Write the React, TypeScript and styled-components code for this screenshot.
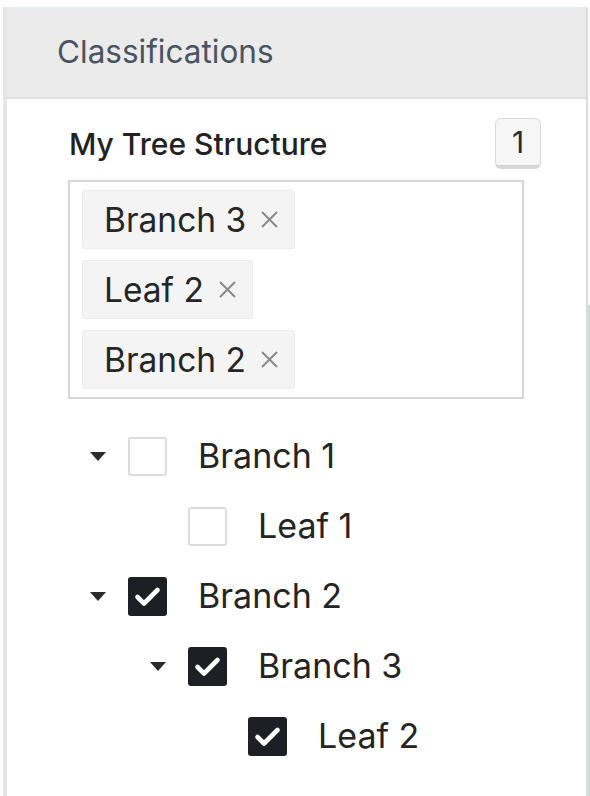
import React from "react";
import styled, { createGlobalStyle } from "styled-components";

const Global = createGlobalStyle`
  html, body { margin: 0; padding: 0; background: #ffffff; }
  body { font-family: Inter, "Noto Sans", "Liberation Sans", sans-serif; }
  * { box-sizing: border-box; }
`;

const Page = styled.div`
  display: flex;
  height: 796px;
  padding-left: 3px;
  padding-top: 7px;
  overflow: hidden;
`;

const Panel = styled.div`
  width: 585px;
  flex: none;
  display: flex;
  flex-direction: column;
  border-left: 4px solid #e6e6e6;
  border-right: 2px solid #dcdcdc;
  border-top: 1px solid #e4eef2;
  background: #ffffff;
`;

const SideStrip = styled.div`
  flex: 1;
  margin-top: 298px;
  background: #cfdcdf;
`;

const Header = styled.div`
  height: 91px;
  background: #ebebeb;
  border-bottom: 2px solid #e1e1e1;
  display: flex;
  align-items: center;
  padding-left: 50px;
  padding-bottom: 2px;
`;

const HeaderTitle = styled.h2`
  margin: 0;
  font-size: 31.5px;
  font-weight: 400;
  color: #4a5461;
`;

const Body = styled.div`
  padding: 19px 62px 0 61px;
  display: flex;
  flex-direction: column;
`;

const LabelRow = styled.div`
  display: flex;
  align-items: center;
  justify-content: space-between;
  margin-right: -17px;
  padding-left: 1px;
  height: 51px;
`;

const Label = styled.span`
  font-size: 30px;
  font-weight: 500;
  color: #222222;
  padding-top: 1px;
`;

const Badge = styled.span`
  width: 46px;
  height: 51px;
  background: #f6f6f6;
  border: 1px solid #dadada;
  border-bottom: 4px solid #d6d6d6;
  border-radius: 6px;
  display: flex;
  align-items: center;
  justify-content: center;
  font-size: 30px;
  color: #2a2a2a;
`;

const TagBox = styled.div`
  margin-top: 11px;
  border: 2px solid #d6d6d6;
  padding: 8px 12px 8px 12px;
  display: flex;
  flex-direction: column;
  align-items: flex-start;
  gap: 11px;
`;

const Tag = styled.div`
  height: 59px;
  display: flex;
  align-items: center;
  padding: 0 15px 0 21px;
  background: #f4f4f4;
  border: 1px solid #ececec;
  border-radius: 3px;
  font-size: 33.5px;
  color: #262626;
`;

const TagRemove = styled.span`
  margin-left: 14px;
  display: flex;
  align-items: center;
`;

const Tree = styled.div`
  margin-top: 22px;
  display: flex;
  flex-direction: column;
`;

const Row = styled.div<{ $level: number }>`
  height: 70px;
  display: flex;
  align-items: center;
  padding-left: ${(p) => 21 + p.$level * 60}px;
`;

const CaretSlot = styled.span`
  width: 39px;
  flex: none;
  display: flex;
  align-items: center;
`;

const Caret = styled.span`
  width: 0;
  height: 0;
  border-left: 8px solid transparent;
  border-right: 8px solid transparent;
  border-top: 9px solid #2b2b2b;
  margin-left: 1px;
`;

const Box = styled.span<{ $checked: boolean }>`
  width: 39px;
  height: 39px;
  flex: none;
  border-radius: 3px;
  border: ${(p) => (p.$checked ? "none" : "2px solid #dcdcdc")};
  background: ${(p) => (p.$checked ? "#1e1f24" : "#ffffff")};
  display: flex;
  align-items: center;
  justify-content: center;
`;

const ItemLabel = styled.span`
  margin-left: 31px;
  font-size: 34px;
  color: #242424;
  padding-bottom: 2px;
`;

const Cross = () => (
  <svg width="19" height="19" viewBox="0 0 19 19">
    <path d="M2 2 L17 17 M17 2 L2 17" stroke="#8a8a8a" strokeWidth="2" fill="none" />
  </svg>
);

const Check = () => (
  <svg width="39" height="39" viewBox="0 0 39 39">
    <polyline
      points="9.5,20 16,26.5 29.5,13"
      stroke="#ffffff"
      strokeWidth="4.6"
      fill="none"
      strokeLinecap="round"
      strokeLinejoin="round"
    />
  </svg>
);

type Node = { label: string; level: number; checked: boolean; branch: boolean };

const nodes: Node[] = [
  { label: "Branch 1", level: 0, checked: false, branch: true },
  { label: "Leaf 1", level: 1, checked: false, branch: false },
  { label: "Branch 2", level: 0, checked: true, branch: true },
  { label: "Branch 3", level: 1, checked: true, branch: true },
  { label: "Leaf 2", level: 2, checked: true, branch: false },
];

const tags = ["Branch 3", "Leaf 2", "Branch 2"];

export default function App() {
  return (
    <>
      <Global />
      <Page>
        <Panel>
          <Header>
            <HeaderTitle>Classifications</HeaderTitle>
          </Header>
          <Body>
            <LabelRow>
              <Label>My Tree Structure</Label>
              <Badge>1</Badge>
            </LabelRow>
            <TagBox>
              {tags.map((t) => (
                <Tag key={t}>
                  {t}
                  <TagRemove>
                    <Cross />
                  </TagRemove>
                </Tag>
              ))}
            </TagBox>
            <Tree>
              {nodes.map((n) => (
                <Row key={n.label} $level={n.level}>
                  <CaretSlot>{n.branch && <Caret />}</CaretSlot>
                  <Box $checked={n.checked}>{n.checked && <Check />}</Box>
                  <ItemLabel>{n.label}</ItemLabel>
                </Row>
              ))}
            </Tree>
          </Body>
        </Panel>
        <SideStrip />
      </Page>
    </>
  );
}
